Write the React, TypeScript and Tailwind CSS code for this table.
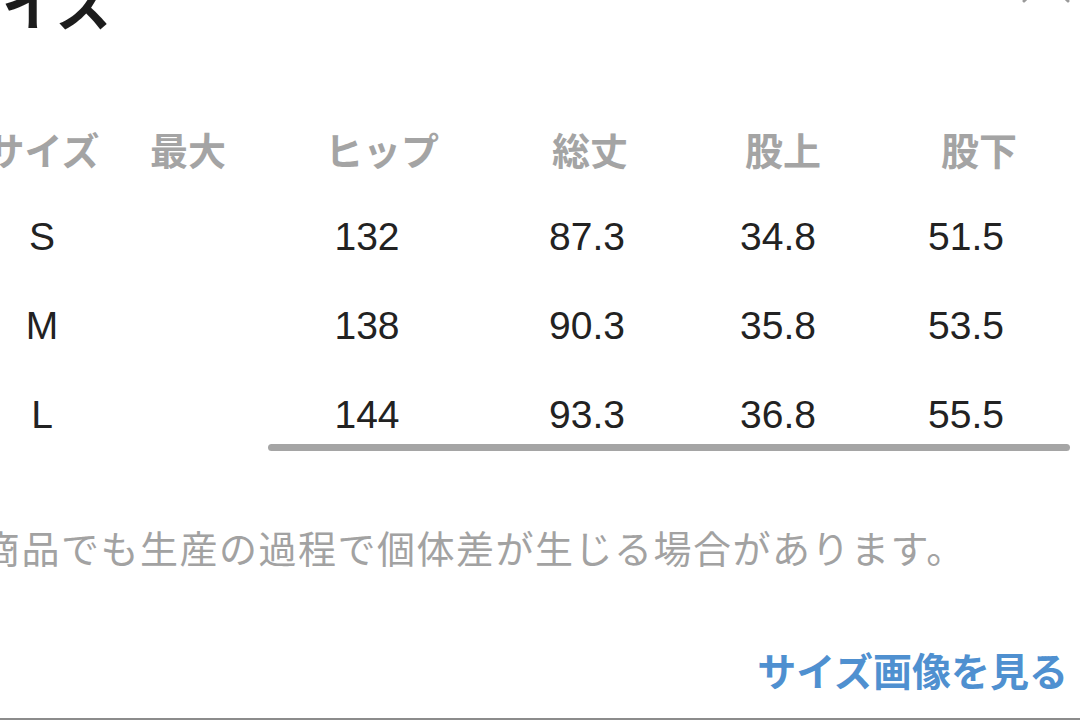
import React from 'react';

const jp = { fontFamily: '"Noto Sans CJK JP", "Noto Sans", sans-serif' };
const num = { fontFamily: '"Liberation Sans", "Noto Sans CJK JP", sans-serif' };

const headers = ['サイズ', '最大', 'ヒップ', '総丈', '股上', '股下'];

const rows = [
  ['S', '', '132', '87.3', '34.8', '51.5'],
  ['M', '', '138', '90.3', '35.8', '53.5'],
  ['L', '', '144', '93.3', '36.8', '55.5'],
];

export default function App() {
  return (
    <div className="w-[1080px] h-[721px] overflow-hidden bg-white flex flex-col">
      {/* header: title + close */}
      <div className="flex items-start justify-between">
        <div
          className="-mt-[27px] -ml-[54px] text-[56px] leading-[56px] font-bold text-[#1c1c1c]"
          style={jp}
        >
          サイズ
        </div>
        <svg
          width="52"
          height="52"
          viewBox="0 0 52 52"
          className="-mt-[47px] mr-[8px]"
          fill="none"
          stroke="#9a9a9a"
          strokeWidth="3"
          strokeLinecap="round"
        >
          <path d="M4 4 L48 48 M48 4 L4 48" />
        </svg>
      </div>

      {/* size table */}
      <div className="relative mt-[75px] -ml-[10px]">
        <div className="grid grid-cols-[106px_184px_204px_212px_174px_218px]">
          {headers.map((h) => (
            <div
              key={h}
              className="h-[89px] flex items-center justify-center text-[38px] font-bold text-[#a4a4a4] whitespace-nowrap"
              style={jp}
            >
              {h}
            </div>
          ))}
        </div>
        <div className="grid grid-cols-[104px_163px_220px_220px_162px_214px]">
          {rows.map((r) =>
            r.map((c, i) => (
              <div
                key={r[0] + i}
                className="h-[89px] flex items-center justify-center text-[39px] text-[#222222]"
                style={num}
              >
                {c}
              </div>
            ))
          )}
        </div>
        {/* scroll indicator */}
        <div className="absolute left-[278px] top-[340px] w-[802px] h-[7px] rounded-full bg-[#a5a5a5]" />
      </div>

      <p
        className="mt-[63px] -ml-[97px] text-[38px] leading-[48px] tracking-[1.5px] text-[#a2a2a2] whitespace-nowrap"
        style={jp}
      >
        同じ商品でも生産の過程で個体差が生じる場合があります。
      </p>

      <div className="mt-[74px] flex justify-end pr-[12px]">
        <span
          className="text-[39px] leading-[48px] font-bold text-[#4f90d0] whitespace-nowrap"
          style={jp}
        >
          サイズ画像を見る
        </span>
      </div>

      <div className="mt-[25px] h-[2px] bg-[#8c8c8c]" />
    </div>
  );
}
